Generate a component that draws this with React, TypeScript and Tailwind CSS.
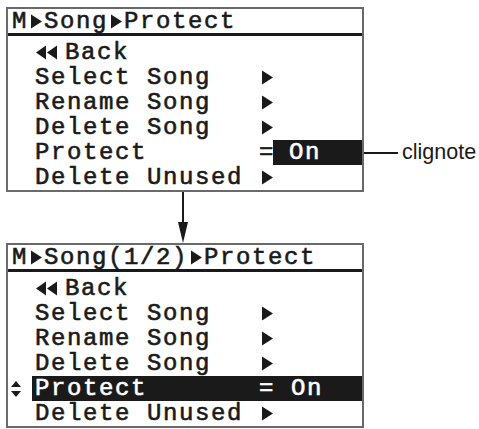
import type { ReactNode } from "react";

const mono =
  "font-['Liberation_Mono','DejaVu_Sans_Mono',monospace] text-[24px] tracking-[1.6px] leading-[25px] [-webkit-text-stroke:0.6px_currentColor]";

function TriRight({ className = "" }: { className?: string }) {
  return (
    <svg width="16" height="25" viewBox="0 0 16 25" className={className}>
      <polygon points="3,5.5 14,12.5 3,19.5" fill="currentColor" />
    </svg>
  );
}

function BackArrows() {
  return (
    <svg width="30" height="25" viewBox="0 0 30 25" className="shrink-0">
      <polygon points="11,5.5 1,12.5 11,19.5" fill="currentColor" />
      <polygon points="22,5.5 12,12.5 22,19.5" fill="currentColor" />
    </svg>
  );
}

function UpDown() {
  return (
    <svg width="12" height="18" viewBox="0 0 12 18">
      <polygon points="6,1 11,7 1,7" fill="#1a1a1a" />
      <polygon points="1,11 11,11 6,17" fill="#1a1a1a" />
    </svg>
  );
}

function Row({
  label,
  children,
  gutter,
  active = false,
}: {
  label: ReactNode;
  children?: ReactNode;
  gutter?: ReactNode;
  active?: boolean;
}) {
  return (
    <div className="flex h-[25px]">
      <div className="flex w-[24px] items-center pl-[2px]">{gutter}</div>
      <div
        className={
          active
            ? "flex flex-1 items-center bg-[#1a1a1a] pl-[3px] text-white"
            : "flex flex-1 items-center pl-[3px]"
        }
      >
        <span className="flex w-[224px] items-center whitespace-pre">{label}</span>
        {children}
      </div>
    </div>
  );
}

function Screen({ path, protect, gutter }: { path: ReactNode; protect: "blink" | "selected"; gutter?: ReactNode }) {
  const arrow = <TriRight className="shrink-0" />;
  return (
    <div className={`w-[358px] border-2 border-[#6a6a6a] bg-white text-[#1a1a1a] ${mono}`}>
      <div className="flex h-[24px] items-center pl-[4px]">{path}</div>
      <div className="h-[3px] bg-[#1a1a1a]" />
      <div className="pt-[4px]">
        <Row
          label={
            <>
              <BackArrows />
              Back
            </>
          }
        />
        <Row label="Select Song">{arrow}</Row>
        <Row label="Rename Song">{arrow}</Row>
        <Row label="Delete Song">{arrow}</Row>
        {protect === "blink" ? (
          <Row label="Protect">
            <span className="w-[14px]">=</span>
            <div className="flex flex-1 items-center self-stretch bg-[#1a1a1a] pl-[16px] text-white">On</div>
          </Row>
        ) : (
          <Row label="Protect" active gutter={gutter}>
            <span className="whitespace-pre">= On</span>
          </Row>
        )}
        <Row label="Delete Unused">{arrow}</Row>
      </div>
    </div>
  );
}

function Path({ parts }: { parts: string[] }) {
  return (
    <>
      {parts.map((p, i) => (
        <span key={i} className="flex items-center">
          {i > 0 && <TriRight className="-my-1 shrink-0" />}
          <span>{p}</span>
        </span>
      ))}
    </>
  );
}

export default function App() {
  return (
    <div className="h-[429px] w-[479px] overflow-hidden bg-white pl-[6px] pt-[7px]">
      <div className="flex items-start">
        <Screen path={<Path parts={["M", "Song", "Protect"]} />} protect="blink" />
        <div className="mt-[133px] flex h-[25px] items-center">
          <div className="h-[2px] w-[34px] bg-[#1a1a1a]" />
          <span className="ml-[4px] font-['Liberation_Sans',Arial,sans-serif] text-[21.5px] leading-none text-[#1a1a1a]">
            clignote
          </span>
        </div>
      </div>
      <svg width="12" height="51" viewBox="0 0 12 51" className="ml-[171px] block">
        <rect x="5" y="0" width="2" height="32" fill="#1a1a1a" />
        <polygon points="1,30 11,30 6,51" fill="#1a1a1a" />
      </svg>
      <Screen path={<Path parts={["M", "Song(1/2)", "Protect"]} />} protect="selected" gutter={<UpDown />} />
    </div>
  );
}
